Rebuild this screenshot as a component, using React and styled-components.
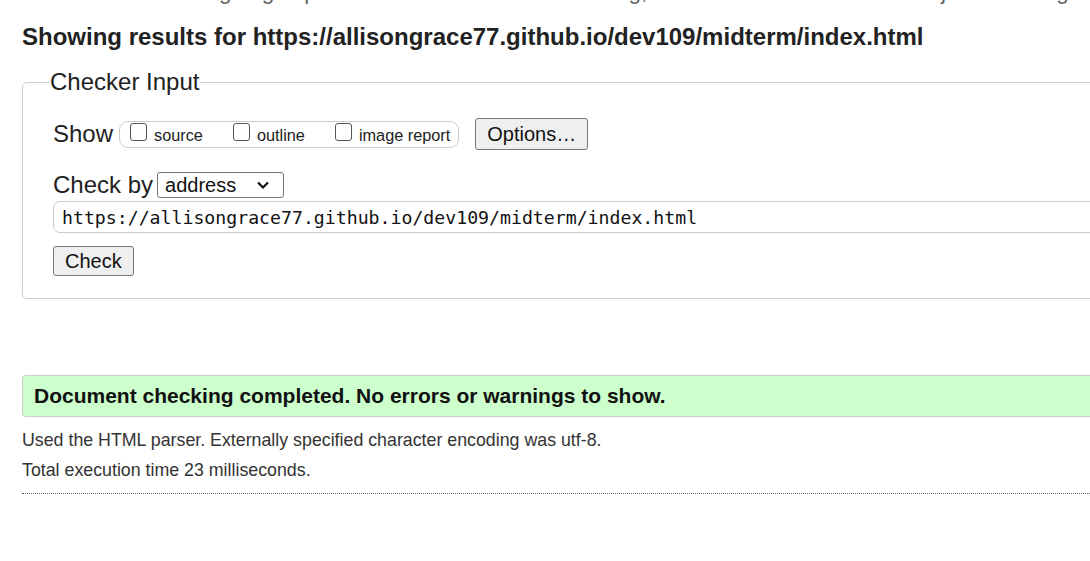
import styled, { createGlobalStyle } from 'styled-components';

const GlobalStyle = createGlobalStyle`
html, body {
  margin: 0;
  padding: 0;
  overflow: hidden;
  background: #fff;
}
body {
  font-family: 'Liberation Sans', Arial, sans-serif;
  color: #222;
}
*, *::before, *::after { box-sizing: border-box; }
`;

export default function App() {
  return (
    <>
      <GlobalStyle />
      <Page>
        <Intro>This tool is an ongoing experiment in better HTML checking, and its behavior remains subject to change</Intro>
        <Heading>Showing results for https://allisongrace77.github.io/dev109/midterm/index.html</Heading>

        <Fieldset>
          <Legend>Checker Input</Legend>
          <Row $top={8}>
            <Label>Show</Label>
            <CheckGroup>
              <CheckItem><Box type="checkbox" />source</CheckItem>
              <CheckItem><Box type="checkbox" />outline</CheckItem>
              <CheckItem><Box type="checkbox" />image report</CheckItem>
            </CheckGroup>
            <Button $height={32} $top={0}>Options…</Button>
          </Row>
          <Row $top={21}>
            <Label>Check by</Label>
            <Select>
              <span>address</span>
              <svg width="14" height="10" viewBox="0 0 14 10">
                <path d="M2 2.5 L7 7.5 L12 2.5" fill="none" stroke="#111" strokeWidth="2.2" />
              </svg>
            </Select>
          </Row>
          <UrlInput>https://allisongrace77.github.io/dev109/midterm/index.html</UrlInput>
          <Button $height={30} $top={13}>Check</Button>
        </Fieldset>

        <Success>Document checking completed. No errors or warnings to show.</Success>
        <Note $top={13}>Used the HTML parser. Externally specified character encoding was utf-8.</Note>
        <Note $top={10}>Total execution time 23 milliseconds.</Note>
        <Rule />
      </Page>
    </>
  );
}

const Page = styled.div`
width: 1180px;
padding: 0 0 0 22px;
`;

const Intro = styled.p`
margin: -22px 0 0 0;
padding-left: 27px;
font-size: 22.5px;
line-height: 28px;
color: #666;
white-space: nowrap;
overflow: hidden;
`;

const Heading = styled.h2`
margin: 0;
padding-top: 17px;
font-size: 24px;
line-height: 28px;
font-weight: bold;
color: #222;
`;

const Fieldset = styled.fieldset`
margin: 17px 0 0 0;
padding: 14px 30px 22px 30px;
border: 1px solid #ccc;
border-radius: 5px;
display: flex;
flex-direction: column;
align-items: flex-start;
min-width: 0;
`;

const Legend = styled.legend`
padding: 0 1px;
margin-left: -4px;
font-size: 24px;
line-height: 28px;
color: #222;
`;

const Row = styled.div`
display: flex;
align-items: center;
gap: 6px;
margin-top: ${p => p.$top}px;
`;

const Label = styled.span`
font-size: 24px;
line-height: 28px;
color: #222;
`;

const CheckGroup = styled.div`
display: flex;
align-items: center;
height: 27px;
padding: 0 8px 0 10px;
border: 1px solid #ccc;
border-radius: 9px;
gap: 30px;
margin-right: 10px;
`;

const CheckItem = styled.label`
display: flex;
align-items: center;
gap: 7px;
font-size: 16.3px;
color: #222;
padding-top: 3px;
`;

const Box = styled.input`
appearance: none;
margin: -8px 0 0 0;
width: 17px;
height: 18px;
border: 1px solid #555;
border-radius: 3px;
background: #fff;
`;

const Button = styled.button`
font-family: 'Liberation Sans', Arial, sans-serif;
font-size: 20px;
color: #111;
background: #efefef;
border: 1px solid #767676;
border-radius: 3px;
height: ${p => p.$height}px;
padding: 0 11px;
margin-top: ${p => p.$top}px;
`;

const Select = styled.div`
display: flex;
align-items: center;
justify-content: space-between;
width: 127px;
height: 26px;
padding: 0 13px 0 7px;
border: 1px solid #767676;
border-radius: 3px;
font-size: 20px;
color: #111;
margin-left: -2px;
`;

const UrlInput = styled.div`
align-self: stretch;
margin-top: 2px;
height: 32px;
display: flex;
align-items: center;
padding: 0 8px;
border: 1px solid #ccc;
border-radius: 7px;
font-family: 'DejaVu Sans Mono', 'Liberation Mono', monospace;
font-size: 18.2px;
color: #111;
`;

const Success = styled.div`
margin-top: 76px;
height: 42px;
display: flex;
align-items: center;
padding: 0 11px;
background: #ccffcc;
border: 1px solid #ccc;
border-radius: 4px;
font-size: 21px;
font-weight: bold;
color: #111;
`;

const Note = styled.p`
margin: ${p => p.$top}px 0 0 0;
font-size: 17.8px;
line-height: 20px;
color: #333;
`;

const Rule = styled.hr`
margin: 13px 0 0 0;
border: none;
border-top: 1px dotted #666;
`;
